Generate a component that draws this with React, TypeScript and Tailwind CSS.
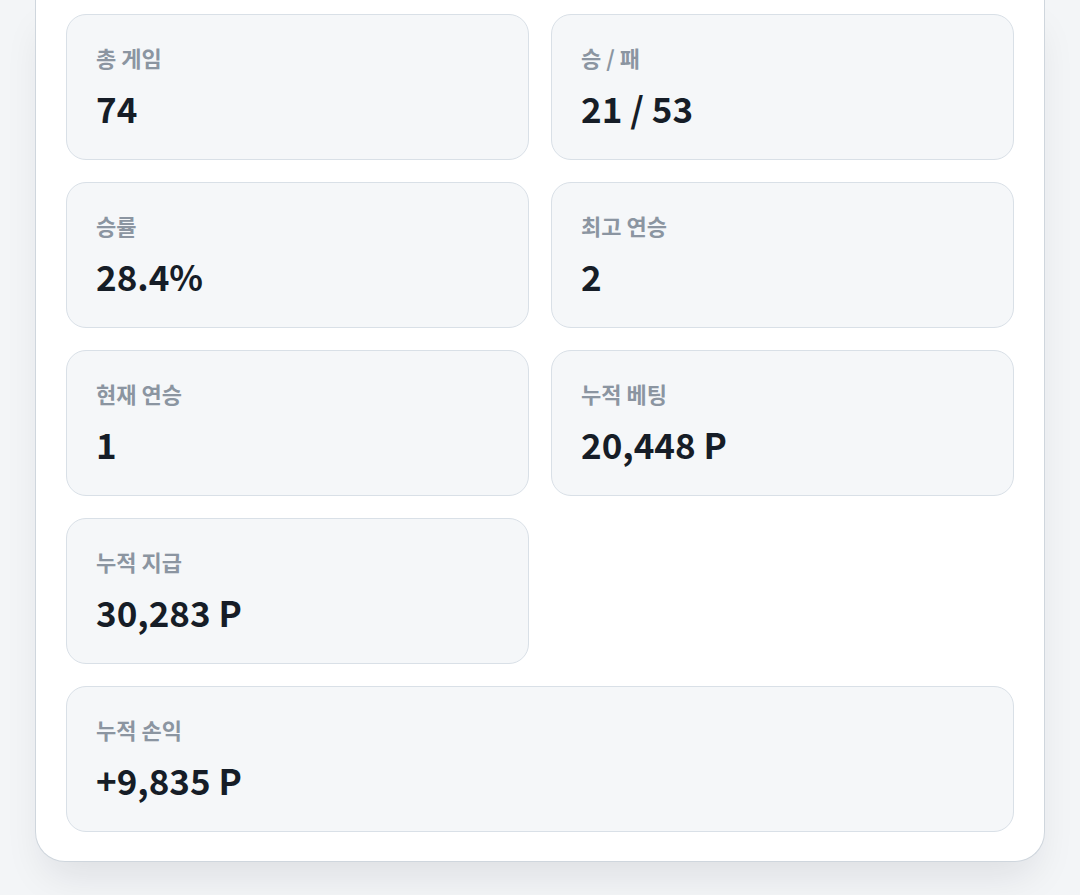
const stats = [
  { label: "총 게임", value: "74" },
  { label: "승 / 패", value: "21 / 53" },
  { label: "승률", value: "28.4%" },
  { label: "최고 연승", value: "2" },
  { label: "현재 연승", value: "1" },
  { label: "누적 베팅", value: "20,448 P" },
  { label: "누적 지급", value: "30,283 P" },
];

const StatCard = ({ label, value, wide }: { label: string; value: string; wide?: boolean }) => (
  <div
    className={`rounded-[20px] border border-[#d9e0e7] bg-[#f5f7f9] px-[29px] pt-[27px] pb-[29px] ${
      wide ? "col-span-2" : ""
    }`}
  >
    <p className="text-[22px] leading-[30px] font-bold text-[#8b95a1]">{label}</p>
    <p className="mt-[14px] text-[35px] leading-[44px] font-bold text-[#161d27]">{value}</p>
  </div>
);

export default function App() {
  return (
    <div
      className="min-h-[895px] bg-[#f3f5f7] px-[35px] pb-[33px]"
      style={{ fontFamily: '"Noto Sans CJK KR", "Noto Sans", sans-serif' }}
    >
      <section className="rounded-b-[30px] border border-t-0 border-[#cfd6dd] bg-white px-[30px] pt-[14px] pb-[29px] shadow-[0_22px_40px_-10px_rgba(15,23,42,0.10)]">
        <div className="grid grid-cols-2 gap-[22px]">
          {stats.map((s) => (
            <StatCard key={s.label} label={s.label} value={s.value} />
          ))}
          <StatCard label="누적 손익" value="+9,835 P" wide />
        </div>
      </section>
    </div>
  );
}
